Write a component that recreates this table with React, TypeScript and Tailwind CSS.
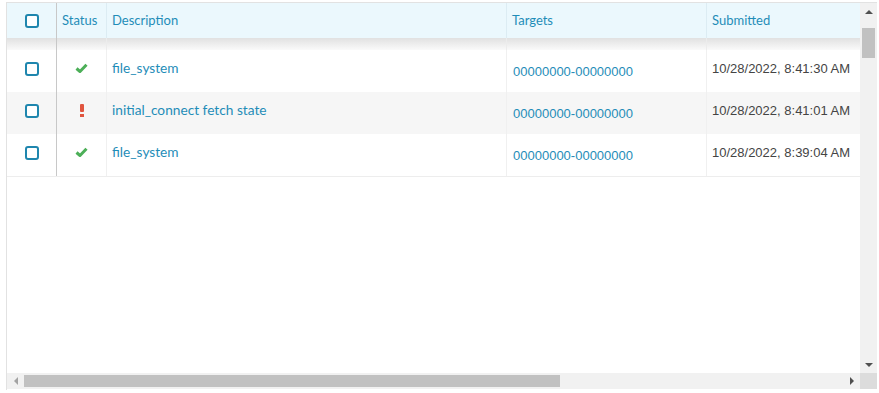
const rows = [
  { ok: true, desc: "file_system", target: "00000000-00000000", time: "10/28/2022, 8:41:30 AM" },
  { ok: false, desc: "initial_connect fetch state", target: "00000000-00000000", time: "10/28/2022, 8:41:01 AM" },
  { ok: true, desc: "file_system", target: "00000000-00000000", time: "10/28/2022, 8:39:04 AM" },
];

const cols = "grid grid-cols-[50px_50px_400px_200px_1fr]";

const Box = () => (
  <div className="w-[14px] h-[14px] rounded-[3px] border-2 border-[#1f86ae] bg-white" />
);

const Check = () => (
  <svg width="13" height="11" viewBox="0 0 13 11">
    <path d="M1.5 5.5 L5 8.5 L11.5 1.8" fill="none" stroke="#4caf58" strokeWidth="3" strokeLinejoin="round" />
  </svg>
);

const Bang = () => (
  <div className="flex flex-col items-center gap-[2px]">
    <div className="w-[4px] h-[8px] bg-[#e0553f] rounded-[1px]" />
    <div className="w-[4px] h-[3px] bg-[#e0553f]" />
  </div>
);

const App = () => {
  return (
    <div className="w-[879px] h-[393px] bg-white pt-[2px] pl-[6px] font-['Lato',sans-serif]">
      <div className="w-[871px] h-[388px] border-t border-l border-[#e2e2e2] flex flex-col">
        <div className="flex flex-1 min-h-0">
          <div className="flex-1 flex flex-col">
            {/* header */}
            <div className={`${cols} h-[35px] bg-[#ebf8fd] text-[13px] text-[#1f8db8]`}>
              <div className="flex items-center justify-center border-r border-[#c8c8c8]">
                <Box />
              </div>
              <div className="flex items-center pl-[5px] border-r border-[#dcecf3]">Status</div>
              <div className="flex items-center pl-[5px] border-r border-[#dcecf3]">Description</div>
              <div className="flex items-center pl-[5px] border-r border-[#dcecf3]">Targets</div>
              <div className="flex items-center pl-[5px]">Submitted</div>
            </div>
            {/* shadow band */}
            <div className={`${cols} h-[12px] bg-gradient-to-b from-[#e1e1e1] to-[#fafafa]`}>
              <div className="border-r border-[#c8c8c8]" />
              <div className="border-r border-[#ececec]" />
              <div className="border-r border-[#ececec]" />
              <div className="border-r border-[#ececec]" />
              <div />
            </div>
            {rows.map((r, i) => (
              <div
                key={i}
                className={`${cols} h-[42px] ${i % 2 === 1 ? "bg-[#f6f6f6]" : "bg-white"}`}
              >
                <div className="flex items-center justify-center pb-[4px] border-r border-[#c8c8c8]">
                  <Box />
                </div>
                <div className="flex items-center justify-center pb-[6px] border-r border-[#f0f0f0]">
                  {r.ok ? <Check /> : <Bang />}
                </div>
                <div className="flex items-center pl-[5px] pb-[5px] text-[13.7px] text-[#1f8db8] border-r border-[#f0f0f0]">
                  {r.desc}
                </div>
                <div className="flex items-center pl-[6px] pt-[1px] text-[#1f8db8] font-['Liberation_Sans',sans-serif] text-[13px] border-r border-[#f0f0f0]">
                  {r.target}
                </div>
                <div className="flex items-center pl-[5px] pb-[5px] text-[#444444] font-['Liberation_Sans',sans-serif] text-[13px]">
                  {r.time}
                </div>
              </div>
            ))}
            <div className="border-t border-[#ededed]" />
          </div>
          {/* vertical scrollbar */}
          <div className="w-[17px] bg-[#f1f1f1] flex flex-col items-center">
            <div className="h-[17px] w-full flex items-center justify-center">
              <div className="w-0 h-0 border-l-[4px] border-r-[4px] border-b-[4px] border-l-transparent border-r-transparent border-b-[#505050]" />
            </div>
            <div className="mt-[8px] w-[13px] h-[30px] bg-[#c1c1c1]" />
            <div className="flex-1" />
            <div className="h-[17px] w-full flex items-center justify-center">
              <div className="w-0 h-0 border-l-[4px] border-r-[4px] border-t-[4px] border-l-transparent border-r-transparent border-t-[#505050]" />
            </div>
          </div>
        </div>
        {/* horizontal scrollbar */}
        <div className="h-[16px] flex bg-[#f1f1f1] mb-[1px]">
          <div className="w-[17px] flex items-center justify-center">
            <div className="w-0 h-0 border-t-[4px] border-b-[4px] border-r-[4px] border-t-transparent border-b-transparent border-r-[#a3a3a3]" />
          </div>
          <div className="flex-1 flex items-center">
            <div className="w-[536px] h-[12px] bg-[#c1c1c1]" />
          </div>
          <div className="w-[17px] flex items-center justify-center">
            <div className="w-0 h-0 border-t-[4px] border-b-[4px] border-l-[4px] border-t-transparent border-b-transparent border-l-[#505050]" />
          </div>
          <div className="w-[17px] bg-[#dcdcdc]" />
        </div>
      </div>
    </div>
  );
};

export default App;
